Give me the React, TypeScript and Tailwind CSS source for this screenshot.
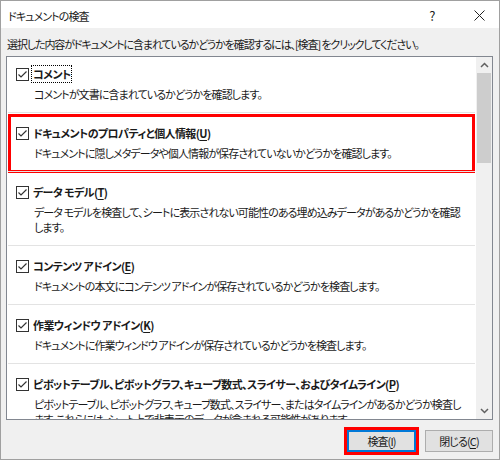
import type { ReactNode } from 'react'

type Item = {
    label: ReactNode
    desc: ReactNode
    focused?: boolean
    highlighted?: boolean
}

function Key({ k }: { k: string }) {
    return <span className="underline underline-offset-2">{k}</span>
}

const items: Item[] = [
    {
        label: 'コメント',
        desc: 'コメントが文書に含まれているかどうかを確認します。',
        focused: true,
    },
    {
        label: (
            <>
                ドキュメントのプロパティと個人情報(<Key k="U" />)
            </>
        ),
        desc: 'ドキュメントに隠しメタデータや個人情報が保存されていないかどうかを確認します。',
        highlighted: true,
    },
    {
        label: (
            <>
                データ モデル(<Key k="T" />)
            </>
        ),
        desc: (
            <>
                データ モデルを検査して、シートに表示されない可能性のある埋め込みデータがあるかどうかを確認
                <br />
                します。
            </>
        ),
    },
    {
        label: (
            <>
                コンテンツ アドイン(<Key k="E" />)
            </>
        ),
        desc: 'ドキュメントの本文にコンテンツ アドインが保存されているかどうかを検査します。',
    },
    {
        label: (
            <>
                作業ウィンドウ アドイン(<Key k="K" />)
            </>
        ),
        desc: 'ドキュメントに作業ウィンドウ アドインが保存されているかどうかを検査します。',
    },
    {
        label: (
            <>
                ピボットテーブル、ピボットグラフ、キューブ数式、スライサー、およびタイムライン(<Key k="P" />)
            </>
        ),
        desc: (
            <>
                ピボットテーブル、ピボットグラフ、キューブ数式、スライサー、またはタイムラインがあるかどうか検査し
                <br />
                ます。これらには、シート上で非表示のデータが含まれる可能性があります。
            </>
        ),
    },
]

function CheckBox() {
    return (
        <svg width="13" height="13" viewBox="0 0 13 13" className="shrink-0">
            <rect x="0.5" y="0.5" width="12" height="12" fill="#fff" stroke="#333" />
            <path d="M2.5 6.5 L5 9 L10.5 3.5" fill="none" stroke="#333" strokeWidth="1.2" />
        </svg>
    )
}

function InspectItem({ item, first }: { item: Item; first: boolean }) {
    return (
        <div
            className={`relative mx-px ${first ? 'pt-[8px]' : 'border-t border-[#e3e3e3] pt-[11px]'} pb-[10px]`}
        >
            {item.highlighted && (
                <div className="absolute left-0 right-0 top-px -bottom-[2px] border-[3px] border-[#ff0000]" />
            )}
            <div className="flex items-center h-[18px] pl-[8px]">
                <CheckBox />
                <span
                    className={`ml-[3px] px-[1px] font-bold tracking-[-0.6px] leading-[16px] whitespace-nowrap ${item.focused ? 'outline outline-1 outline-dotted outline-black' : ''}`}
                >
                    {item.label}
                </span>
            </div>
            <div className="mt-[4px] pl-[26px] leading-[15px] whitespace-nowrap">{item.desc}</div>
        </div>
    )
}

function ScrollBar() {
    return (
        <div className="w-[16px] bg-[#f0f0f0] flex flex-col items-center">
            <div className="h-[16px] flex items-center justify-center">
                <svg width="9" height="6" viewBox="0 0 9 6">
                    <path d="M1 5 L4.5 1.5 L8 5" fill="none" stroke="#606060" strokeWidth="1.5" />
                </svg>
            </div>
            <div className="w-[14px] h-[90px] bg-[#cdcdcd]" />
            <div className="flex-1" />
            <div className="h-[16px] flex items-center justify-center">
                <svg width="9" height="6" viewBox="0 0 9 6">
                    <path d="M1 1 L4.5 4.5 L8 1" fill="none" stroke="#606060" strokeWidth="1.5" />
                </svg>
            </div>
        </div>
    )
}

export default function App() {
    return (
        <div className="w-[500px] h-[460px] border border-[#a0a0a0] bg-[#f0f0f0] flex flex-col text-[11px] tracking-[-0.9px] text-[#1a1a1a] font-['Noto_Sans_CJK_JP',sans-serif] [font-feature-settings:'palt']">
            {/* タイトルバー */}
            <div className="h-[27px] pt-[2px] bg-white flex items-center pl-[7px]">
                <span className="flex-1 leading-[16px]">ドキュメントの検査</span>
                <span className="w-[14px] text-center text-[13px] mr-[35px]">?</span>
                <svg width="11" height="11" viewBox="0 0 11 11" className="mr-[14px]">
                    <path d="M0.5 0.5 L10.5 10.5 M10.5 0.5 L0.5 10.5" stroke="#222" strokeWidth="1" />
                </svg>
            </div>

            <div className="px-[5px] mr-px">
                <div className="pt-[8px] pb-[4px] pl-[1px] leading-[16px] tracking-[-1.1px] whitespace-nowrap">
                    選択した内容がドキュメントに含まれているかどうかを確認するには、[検査] をクリックしてください。
                </div>

                <div className="h-[364px] border border-[#828790] bg-white flex">
                    <div className="flex-1 overflow-hidden">
                        {items.map((item, i) => (
                            <InspectItem key={i} item={item} first={i === 0} />
                        ))}
                    </div>
                    <ScrollBar />
                </div>

                <div className="mt-[7px] flex justify-end items-center">
                    <div className="border-[3px] border-[#ff0000]">
                        <button className="w-[69px] h-[22px] bg-[#e1e1e1] border border-[#0078d7] outline outline-1 -outline-offset-2 outline-[#0078d7] leading-[16px]">
                            検査(<Key k="I" />)
                        </button>
                    </div>
                    <button className="ml-[6px] w-[68px] h-[22px] bg-[#e1e1e1] border border-[#adadad] leading-[16px]">
                        閉じる(<Key k="C" />)
                    </button>
                </div>
            </div>
        </div>
    )
}
